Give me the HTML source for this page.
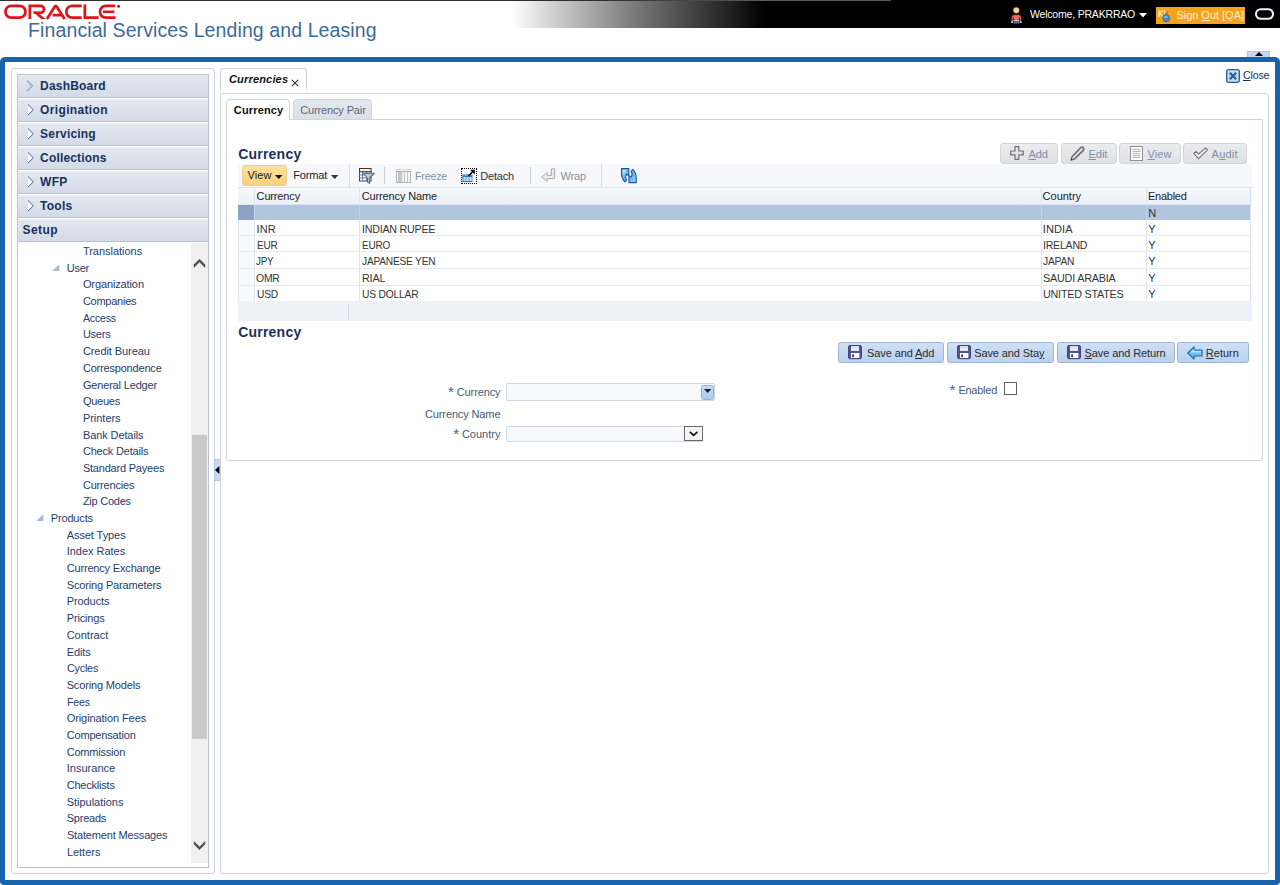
<!DOCTYPE html><html><head><meta charset="utf-8"><title>Currencies</title><style>
html,body{margin:0;padding:0}
body{width:1280px;height:885px;position:relative;overflow:hidden;background:#fff;font-family:"Liberation Sans", sans-serif;font-size:11px}
.t{position:absolute;white-space:pre;line-height:normal}
u{text-decoration:underline;text-underline-offset:1px}


.ah{position:absolute;left:18px;width:190px;height:23px;background:linear-gradient(#e3e8f0,#d4dbe7);border-top:1px solid #eaeef5;border-bottom:1px solid #b9c2cf;box-sizing:border-box}
.row{position:absolute;left:238px;width:1013px;border-bottom:1px solid #e4e8ee;box-sizing:border-box;background:#fff}
.cd{position:absolute;width:1px;background:#dfe4ea}
.gb{position:absolute;box-sizing:border-box;border:1px solid #d2d4d8;border-radius:3px;background:linear-gradient(#ececee,#e0e1e4)}
.bb{position:absolute;box-sizing:border-box;border:1px solid #9cb3d2;border-radius:2.5px;background:linear-gradient(#cfe0f4,#b9d1ee)}
svg{position:absolute;overflow:visible}

</style></head><body>
<div style="position:absolute;left:512px;top:0px;width:768px;height:28px;background:linear-gradient(to right,#fff 0px,#c8c8c8 48px,#747474 128px,#000 253px);border-bottom-left-radius:8px 3px"></div>
<div style="position:absolute;left:0px;top:0px;width:891px;height:1px;background:linear-gradient(to right,#2e2e2e 0px,#2e2e2e 600px,#5a5a5a 760px)"></div>
<svg style="left:0;top:0.2px" width="125" height="24" viewBox="0 0 125 24" fill="none" stroke="#e11219" stroke-width="2.7" stroke-linejoin="miter">
<rect x="5.45" y="5.85" width="20" height="11.8" rx="5.9" ry="5.9"/>
<path d="M29.85 19 V5.85 H40.6 A3.45 3.45 0 0 1 40.6 12.75 H33.6"/><path d="M32.6 11.4 H36.6 L45.4 19 H41.2Z" fill="#e11219" stroke="none"/>
<path d="M46.9 19 L55.2 6 H56.3 L64.6 19 M52.6 15.2 H61.5" stroke-linejoin="round"/>
<path d="M81.7 5.85 H72.2 A5.9 5.9 0 0 0 72.2 17.65 H81.7"/>
<path d="M84.85 4.5 V17.65 H98.5"/>
<path d="M115 5.85 H105.9 A5.9 5.9 0 0 0 105.9 17.65 H115.5 M103 11.75 H114.3"/>
<circle cx="118.6" cy="6.3" r="1.0" stroke-width="1.1" fill="#e11219"/>
</svg>
<span class="t" style="left:28.10px;top:19.00px;font-size:19.5px;color:#3c6a9c;letter-spacing:0.102px;">Financial Services Lending and Leasing</span>
<svg style="left:1010px;top:6px" width="14" height="19" viewBox="0 0 14 19">
<circle cx="6.3" cy="4.2" r="3.5" fill="#6a2a06"/><circle cx="6.3" cy="4.2" r="2.8" fill="#e9d6a4"/>
<path d="M1.6 14.6 V11.4 Q1.8 8.8 4.4 8.8 H8.4 Q11 8.8 11.2 11.4 V14.6 H9.6 V11.6 H9.2 V14.3 H3.6 V11.6 H3.2 V14.6Z" fill="#f0686e" stroke="#5a1c08" stroke-width="0.6"/>
<rect x="3.6" y="14.2" width="5.6" height="0.9" fill="#e8e4dc"/>
<rect x="3.8" y="15" width="5.2" height="2.6" fill="#3b6bb2"/>
<rect x="1.2" y="14.8" width="2" height="2.2" fill="#cfc09a"/><rect x="9.6" y="14.8" width="2" height="2.2" fill="#cfc09a"/>
</svg>
<span class="t" style="left:1029.90px;top:8.00px;font-size:11px;color:#fff;letter-spacing:-0.220px;transform:scaleX(0.9575);transform-origin:0 0;">Welcome, PRAKRRAO</span>
<svg style="left:1139px;top:13px" width="8" height="5"><path d="M0 0H8L4 4.5Z" fill="#fff"/></svg>
<div style="position:absolute;left:1156px;top:7px;width:89px;height:17px;background:#f5a31c"></div>
<svg style="left:1157px;top:8px" width="16" height="15" viewBox="0 0 16 15">
<path d="M2 2.4 V9 M2.4 5.8 L5.8 2.2 M3 5.6 L6.4 8.6" stroke="#fae3b0" stroke-width="1.5" fill="none"/>
<path d="M7.6 2 V8.6" stroke="#f3d9a0" stroke-width="1.3"/>
<path d="M6.2 7.4 Q9 5.4 11.6 7.6 Q13.6 10.6 11.8 13 Q9 14.8 6.6 13 Q5.2 10.4 6.2 7.4Z" fill="#4a8ad2" stroke="#2c5a94" stroke-width="0.7"/>
<path d="M7 9.4 Q9 8.2 10.6 9.2" stroke="#bcd8f4" stroke-width="0.9" fill="none"/>
<circle cx="10.4" cy="4.2" r="0.9" fill="#e85a6a"/><path d="M8.6 6.2 L10.6 5" stroke="#6a3a10" stroke-width="0.8"/>
</svg>
<span class="t" style="left:1176.40px;top:9.00px;font-size:11px;color:#fdeecb;letter-spacing:-0.022px;">Sign <u>O</u>ut [QA]</span>
<svg style="left:1255px;top:8px" width="19" height="12"><rect x="1" y="1.2" width="17" height="9.6" rx="4.8" fill="none" stroke="#c4d8f6" stroke-width="2.1"/><rect x="1" y="1.2" width="17" height="9.6" rx="4.8" fill="none" stroke="#fff" stroke-width="1.1"/></svg>
<div style="position:absolute;left:1247px;top:51px;width:23px;height:7px;background:#c4d8ef;border:1px solid #b0c8e6;border-bottom:0;box-sizing:border-box"></div>
<svg style="left:1254.5px;top:52px" width="8" height="4"><path d="M0 4L4 0L8 4Z" fill="#000"/></svg>
<div style="position:absolute;left:0px;top:57px;width:1280px;height:828px;box-sizing:border-box;border:5px solid #1664ae;border-radius:5px 5px 4px 4px;background:#fff"></div>
<div style="position:absolute;left:11px;top:68px;width:204px;height:806px;box-sizing:border-box;border:1px solid #cdd2d9;border-radius:3px"></div>
<div style="position:absolute;left:17px;top:74px;width:192px;height:794px;box-sizing:border-box;border:1px solid #b9c3d1"></div>
<div class="ah" style="top:75px"></div>
<svg style="left:26px;top:80px" width="8" height="12"><path d="M1 0.6 L6.4 5.8 L1 11" fill="none" stroke="#9cb2cd" stroke-width="1.7"/></svg>
<span class="t" style="left:40.10px;top:79.00px;font-size:12px;color:#18325c;font-weight:700;letter-spacing:0.198px;">DashBoard</span>
<div class="ah" style="top:99px"></div>
<svg style="left:26.8px;top:104px" width="8" height="12"><path d="M1 0.6 L6.4 5.8 L1 11" fill="rgba(255,255,255,.75)" stroke="#4b6084" stroke-width="1.0"/></svg>
<span class="t" style="left:40.10px;top:103.00px;font-size:12px;color:#18325c;font-weight:700;letter-spacing:0.345px;">Origination</span>
<div class="ah" style="top:123px"></div>
<svg style="left:26.8px;top:128px" width="8" height="12"><path d="M1 0.6 L6.4 5.8 L1 11" fill="rgba(255,255,255,.75)" stroke="#4b6084" stroke-width="1.0"/></svg>
<span class="t" style="left:40.10px;top:127.00px;font-size:12px;color:#18325c;font-weight:700;letter-spacing:0.197px;">Servicing</span>
<div class="ah" style="top:147px"></div>
<svg style="left:26.8px;top:152px" width="8" height="12"><path d="M1 0.6 L6.4 5.8 L1 11" fill="rgba(255,255,255,.75)" stroke="#4b6084" stroke-width="1.0"/></svg>
<span class="t" style="left:40.10px;top:151.00px;font-size:12px;color:#18325c;font-weight:700;letter-spacing:0.169px;">Collections</span>
<div class="ah" style="top:171px"></div>
<svg style="left:26.8px;top:176px" width="8" height="12"><path d="M1 0.6 L6.4 5.8 L1 11" fill="rgba(255,255,255,.75)" stroke="#4b6084" stroke-width="1.0"/></svg>
<span class="t" style="left:40.10px;top:175.00px;font-size:12px;color:#18325c;font-weight:700;letter-spacing:0.209px;">WFP</span>
<div class="ah" style="top:195px"></div>
<svg style="left:26.8px;top:200px" width="8" height="12"><path d="M1 0.6 L6.4 5.8 L1 11" fill="rgba(255,255,255,.75)" stroke="#4b6084" stroke-width="1.0"/></svg>
<span class="t" style="left:40.10px;top:199.00px;font-size:12px;color:#18325c;font-weight:700;letter-spacing:0.238px;">Tools</span>
<div class="ah" style="top:219px"></div>
<span class="t" style="left:22.60px;top:223.00px;font-size:12px;color:#18325c;font-weight:700;letter-spacing:0.411px;">Setup</span>
<div style="position:absolute;left:191px;top:243px;width:17px;height:620px;background:#f0f0f0"></div>
<div style="position:absolute;left:192px;top:435px;width:15px;height:304px;background:#c9c9c9"></div>
<svg style="left:0;top:0" width="1280" height="885"><path d="M193.8 264.6 L199.5 258.9 L205.2 264.6 V267.9 L199.5 262.3 L193.8 267.9Z" fill="#4f4f4f"/><path d="M193.8 844.3 L199.5 850 L205.2 844.3 V841 L199.5 846.7 L193.8 841Z" fill="#4f4f4f"/></svg>
<span class="t" style="left:82.90px;top:245.00px;font-size:11px;color:#1f3d6b;letter-spacing:-0.018px;">Translations</span>
<span class="t" style="left:66.70px;top:262.00px;font-size:11px;color:#1f3d6b;letter-spacing:-0.234px;">User</span>
<svg style="left:51.7px;top:264px" width="8" height="8"><path d="M7.3 0.3 V7 H0.3Z" fill="#a9b9d1"/></svg>
<span class="t" style="left:82.90px;top:278.00px;font-size:11px;color:#1f3d6b;letter-spacing:-0.115px;">Organization</span>
<span class="t" style="left:82.90px;top:295.00px;font-size:11px;color:#1f3d6b;letter-spacing:-0.249px;">Companies</span>
<span class="t" style="left:82.90px;top:312.00px;font-size:11px;color:#1f3d6b;letter-spacing:-0.220px;transform:scaleX(0.9605);transform-origin:0 0;">Access</span>
<span class="t" style="left:82.90px;top:328.00px;font-size:11px;color:#1f3d6b;letter-spacing:-0.247px;">Users</span>
<span class="t" style="left:82.90px;top:345.00px;font-size:11px;color:#1f3d6b;letter-spacing:-0.075px;">Credit Bureau</span>
<span class="t" style="left:82.90px;top:362.00px;font-size:11px;color:#1f3d6b;letter-spacing:-0.189px;">Correspondence</span>
<span class="t" style="left:82.90px;top:379.00px;font-size:11px;color:#1f3d6b;letter-spacing:-0.168px;">General Ledger</span>
<span class="t" style="left:82.90px;top:395.00px;font-size:11px;color:#1f3d6b;letter-spacing:-0.239px;">Queues</span>
<span class="t" style="left:82.90px;top:412.00px;font-size:11px;color:#1f3d6b;letter-spacing:-0.026px;">Printers</span>
<span class="t" style="left:82.90px;top:429.00px;font-size:11px;color:#1f3d6b;letter-spacing:-0.097px;">Bank Details</span>
<span class="t" style="left:82.90px;top:445.00px;font-size:11px;color:#1f3d6b;letter-spacing:-0.181px;">Check Details</span>
<span class="t" style="left:82.90px;top:462.00px;font-size:11px;color:#1f3d6b;letter-spacing:-0.206px;">Standard Payees</span>
<span class="t" style="left:82.90px;top:479.00px;font-size:11px;color:#1f3d6b;letter-spacing:-0.169px;">Currencies</span>
<span class="t" style="left:82.90px;top:495.00px;font-size:11px;color:#1f3d6b;letter-spacing:-0.249px;">Zip Codes</span>
<span class="t" style="left:50.70px;top:512.00px;font-size:11px;color:#1f3d6b;letter-spacing:-0.140px;">Products</span>
<svg style="left:35.7px;top:514px" width="8" height="8"><path d="M7.3 0.3 V7 H0.3Z" fill="#a9b9d1"/></svg>
<span class="t" style="left:66.70px;top:529.00px;font-size:11px;color:#1f3d6b;letter-spacing:-0.074px;">Asset Types</span>
<span class="t" style="left:66.70px;top:545.00px;font-size:11px;color:#1f3d6b;letter-spacing:-0.018px;">Index Rates</span>
<span class="t" style="left:66.70px;top:562.00px;font-size:11px;color:#1f3d6b;letter-spacing:-0.171px;">Currency Exchange</span>
<span class="t" style="left:66.70px;top:579.00px;font-size:11px;color:#1f3d6b;letter-spacing:-0.145px;">Scoring Parameters</span>
<span class="t" style="left:66.70px;top:595.00px;font-size:11px;color:#1f3d6b;letter-spacing:-0.078px;">Products</span>
<span class="t" style="left:66.70px;top:612.00px;font-size:11px;color:#1f3d6b;letter-spacing:-0.141px;">Pricings</span>
<span class="t" style="left:66.70px;top:629.00px;font-size:11px;color:#1f3d6b;letter-spacing:-0.010px;">Contract</span>
<span class="t" style="left:66.70px;top:646.00px;font-size:11px;color:#1f3d6b;letter-spacing:-0.074px;">Edits</span>
<span class="t" style="left:66.70px;top:662.00px;font-size:11px;color:#1f3d6b;letter-spacing:-0.220px;transform:scaleX(0.9812);transform-origin:0 0;">Cycles</span>
<span class="t" style="left:66.70px;top:679.00px;font-size:11px;color:#1f3d6b;letter-spacing:-0.152px;">Scoring Models</span>
<span class="t" style="left:66.70px;top:696.00px;font-size:11px;color:#1f3d6b;letter-spacing:-0.220px;transform:scaleX(0.9666);transform-origin:0 0;">Fees</span>
<span class="t" style="left:66.70px;top:712.00px;font-size:11px;color:#1f3d6b;letter-spacing:-0.082px;">Origination Fees</span>
<span class="t" style="left:66.70px;top:729.00px;font-size:11px;color:#1f3d6b;letter-spacing:-0.170px;">Compensation</span>
<span class="t" style="left:66.70px;top:746.00px;font-size:11px;color:#1f3d6b;letter-spacing:-0.202px;">Commission</span>
<span class="t" style="left:66.70px;top:762.00px;font-size:11px;color:#1f3d6b;letter-spacing:0.021px;">Insurance</span>
<span class="t" style="left:66.70px;top:779.00px;font-size:11px;color:#1f3d6b;letter-spacing:-0.212px;">Checklists</span>
<span class="t" style="left:66.70px;top:796.00px;font-size:11px;color:#1f3d6b;letter-spacing:-0.015px;">Stipulations</span>
<span class="t" style="left:66.70px;top:812.00px;font-size:11px;color:#1f3d6b;letter-spacing:-0.226px;">Spreads</span>
<span class="t" style="left:66.90px;top:829.00px;font-size:11px;color:#1f3d6b;letter-spacing:-0.158px;">Statement Messages</span>
<span class="t" style="left:66.90px;top:846.00px;font-size:11px;color:#1f3d6b;letter-spacing:-0.020px;">Letters</span>
<div style="position:absolute;left:214px;top:459px;width:7px;height:22px;background:#c6daf2;border:1px solid #b3cbe8;box-sizing:border-box"></div>
<svg style="left:214.8px;top:465.5px" width="5" height="9"><path d="M4.4 0 V8 L0 4Z" fill="#000"/></svg>
<div style="position:absolute;left:220px;top:68px;width:87px;height:20px;box-sizing:border-box;border:1px solid #cdd1d7;border-bottom:0;border-radius:4px 4px 0 0;background:#fff"></div>
<div style="position:absolute;left:220px;top:88px;width:1px;height:5px;background:linear-gradient(#cdd1d7,#fff)"></div>
<div style="position:absolute;left:306px;top:88px;width:1px;height:2px;background:#e6e8eb"></div>
<span class="t" style="left:229.00px;top:73.00px;font-size:11px;color:#111;font-weight:700;font-style:italic;letter-spacing:0.172px;">Currencies</span>
<svg style="left:291px;top:78.5px" width="8" height="8"><path d="M0.8 0.8 L7.2 7.2 M7.2 0.8 L0.8 7.2" stroke="#333" stroke-width="1.1"/></svg>
<div style="position:absolute;left:220px;top:93px;width:1049px;height:781px;box-sizing:border-box;border:1px solid #d0d4da;border-radius:2px 3px 3px 3px"></div>
<svg style="left:1226px;top:69px" width="14" height="14"><rect x="0.7" y="0.7" width="12.6" height="12.6" rx="1.8" fill="#bddcf6" stroke="#2a5b8f" stroke-width="1.3"/><path d="M3.8 3.8 L10.2 10.2 M10.2 3.8 L3.8 10.2" stroke="#2a6099" stroke-width="2.3"/></svg>
<span class="t" style="left:1242.90px;top:69.00px;font-size:11px;color:#18325c;letter-spacing:-0.220px;transform:scaleX(0.9726);transform-origin:0 0;"><u>C</u>lose</span>
<div style="position:absolute;left:226px;top:119px;width:1037px;height:342px;box-sizing:border-box;border:1px solid #d0d4da;border-radius:0 0 3px 3px"></div>
<div style="position:absolute;left:293px;top:99px;width:79px;height:21px;box-sizing:border-box;border:1px solid #d0d6de;border-radius:4px 4px 0 0;background:linear-gradient(#e4e9ef,#d9dfe7)"></div>
<div style="position:absolute;left:226px;top:99px;width:64px;height:21px;box-sizing:border-box;border:1px solid #d0d4da;border-bottom:0;border-radius:4px 4px 0 0;background:#fff"></div>
<span class="t" style="left:233.80px;top:104.00px;font-size:11px;color:#111;font-weight:700;letter-spacing:0.163px;">Currency</span>
<span class="t" style="left:300.20px;top:104.00px;font-size:11px;color:#5d6875;letter-spacing:-0.135px;">Currency Pair</span>
<span class="t" style="left:238.20px;top:146.00px;font-size:14px;color:#18325c;font-weight:700;letter-spacing:0.216px;">Currency</span>
<div class="gb" style="left:1000px;top:143px;width:57.5px;height:21px"></div>
<span class="t" style="left:1028.60px;top:148.00px;font-size:11px;color:#7d90ac;letter-spacing:-0.131px;"><u>A</u>dd</span>
<div class="gb" style="left:1060.5px;top:143px;width:56.0px;height:21px"></div>
<span class="t" style="left:1088.40px;top:148.00px;font-size:11px;color:#7d90ac;letter-spacing:0.008px;"><u>E</u>dit</span>
<div class="gb" style="left:1119.2px;top:143px;width:61.399999999999864px;height:21px"></div>
<span class="t" style="left:1147.60px;top:148.00px;font-size:11px;color:#7d90ac;letter-spacing:0.086px;"><u>V</u>iew</span>
<div class="gb" style="left:1183.2px;top:143px;width:63.399999999999864px;height:21px"></div>
<span class="t" style="left:1211.60px;top:148.00px;font-size:11px;color:#7d90ac;letter-spacing:0.201px;">A<u>u</u>dit</span>
<svg style="left:1010px;top:145.7px" width="14" height="14"><path d="M5 0.7 H8.8 V5 H13.3 V8.8 H8.8 V13.3 H5 V8.8 H0.7 V5 H5Z" fill="#e2e2e3" stroke="#707174" stroke-width="1.2" stroke-linejoin="round"/></svg>
<svg style="left:1070px;top:146px" width="16" height="15"><path d="M2 10.6 L11 1.2 Q12.2 0.4 13.4 1.6 Q14.6 2.8 13.8 4 L4.6 13 L0.9 14.2Z" fill="#c4c4c6" stroke="#58595c" stroke-width="1.1" stroke-linejoin="round"/><path d="M3.4 11.8 L12.4 2.6" stroke="#f0f0f0" stroke-width="0.9"/><path d="M0.9 14.2 L2.4 13.7 L1.4 12.7Z" fill="#333"/></svg>
<svg style="left:1130px;top:146px" width="13" height="15"><rect x="0.5" y="0.5" width="12" height="14" fill="#fbfbfb" stroke="#8e9094"/><path d="M2.6 3.5H10.4M2.6 5.5H10.4M2.6 7.5H10.4M2.6 9.5H10.4M2.6 11.5H10.4" stroke="#b4b6ba" stroke-width="1"/></svg>
<svg style="left:1193px;top:147px" width="16" height="13"><path d="M0.8 6.4 L2.9 4.4 L5.5 7.2 L12.5 0.8 L14.6 2.9 L5.5 11.6Z" fill="#f3f3f4" stroke="#707174" stroke-width="1.1" stroke-linejoin="round"/></svg>
<div style="position:absolute;left:238px;top:164px;width:1014px;height:23px;background:#f7f8fb"></div>
<div style="position:absolute;left:242px;top:165px;width:45px;height:21px;box-sizing:border-box;border:1px solid #efcf8c;border-radius:3px;background:linear-gradient(#fde0a0,#fbd17c)"></div>
<span class="t" style="left:247.60px;top:169.00px;font-size:11px;color:#222;letter-spacing:0.036px;">View</span>
<svg style="left:275px;top:175px" width="8" height="5"><path d="M0 0H7.4L3.7 4Z" fill="#111"/></svg>
<span class="t" style="left:293.20px;top:169.00px;font-size:11px;color:#222;letter-spacing:-0.124px;">Format</span>
<svg style="left:330.5px;top:175px" width="8" height="5"><path d="M0 0H7.4L3.7 4Z" fill="#333"/></svg>
<div style="position:absolute;left:349px;top:164px;width:1px;height:23px;background:#d9dee6"></div>
<div style="position:absolute;left:601px;top:164px;width:1px;height:23px;background:#d9dee6"></div>
<div style="position:absolute;left:384px;top:167px;width:1px;height:17px;background:#c9d0db"></div>
<div style="position:absolute;left:530px;top:167px;width:1px;height:17px;background:#c9d0db"></div>
<svg style="left:359px;top:168px" width="17" height="17" viewBox="0 0 17 17">
<rect x="0.5" y="3.6" width="11.6" height="9.4" fill="#fff" stroke="#3b4a78" stroke-width="1"/>
<rect x="3.8" y="4.2" width="8" height="1.5" fill="#bfe8f5"/>
<path d="M0.5 6.9H12M0.5 9.9H12M3.6 3.8V13M7.6 3.8V13" stroke="#6175ad" stroke-width="1"/>
<rect x="0.5" y="0.5" width="11.6" height="3.2" fill="#fdf1cf" stroke="#3a3a3a" stroke-width="1"/>
<path d="M4.2 5.3 H15.6 L10.7 10.2 V15.5 L8.5 14.2 V10.2Z" fill="#b9c9d9" stroke="#4d6478" stroke-width="1" stroke-linejoin="round"/>
<path d="M13.4 6.4 L10.4 9.6 V14.6" stroke="#64788c" stroke-width="1" fill="none"/>
</svg>
<svg style="left:396px;top:169px" width="16" height="14" viewBox="0 0 16 14"><rect x="0.5" y="0.5" width="14" height="2" fill="#fafafa" stroke="#d6d6d6"/><rect x="0.5" y="2.5" width="14" height="11" fill="#fcfcfc" stroke="#b1b1b1"/><rect x="3" y="3" width="2.4" height="10" fill="#c9c9c9"/><path d="M2.6 3V13M5.8 3V13M8.4 3V13M11.6 3V13" stroke="#bcbcbc" stroke-width="1"/></svg>
<span class="t" style="left:415.20px;top:170.00px;font-size:11px;color:#7f93ad;letter-spacing:-0.220px;transform:scaleX(0.9748);transform-origin:0 0;">Freeze</span>
<div style="position:absolute;left:461px;top:168px;width:16px;height:16px;box-sizing:border-box;border:1px dotted #000;background:#fff"></div>
<svg style="left:461px;top:168px" width="16" height="16" viewBox="0 0 16 16"><rect x="1.4" y="6.6" width="10" height="7.4" fill="#2f70b3"/><rect x="1.4" y="6.6" width="10" height="1.6" fill="#5d9bd9"/><rect x="2.4" y="9" width="2.2" height="4" fill="#e4f1fd"/><rect x="5.4" y="9" width="2.2" height="4" fill="#e4f1fd"/><rect x="8.4" y="9" width="2.2" height="4" fill="#e4f1fd"/><path d="M2.4 11H10.6" stroke="#8db9e6" stroke-width="0.8"/><path d="M7.4 8 L12.4 3" stroke="#000" stroke-width="1.5"/><path d="M9 1.8 H13.8 V6.6Z" fill="#000"/></svg>
<span class="t" style="left:480.20px;top:170.00px;font-size:11px;color:#333;letter-spacing:-0.177px;">Detach</span>
<svg style="left:541px;top:168px" width="15" height="15" viewBox="0 0 15 15"><path d="M10.4 0.8 H13.6 V10.6 H6.2 V13.4 L0.8 9 L6.2 4.6 V7.4 H10.4Z" fill="#ededee" stroke="#a9abaf" stroke-width="1"/></svg>
<span class="t" style="left:560.40px;top:170.00px;font-size:11px;color:#8d8f93;letter-spacing:-0.098px;">Wrap</span>
<svg style="left:621px;top:168px" width="16" height="16" viewBox="0 0 16 16">
<defs><linearGradient id="rg" x1="0" y1="0" x2="1" y2="1"><stop offset="0" stop-color="#9fd4fb"/><stop offset="1" stop-color="#3f9cec"/></linearGradient></defs>
<g fill="url(#rg)" stroke="#15569f" stroke-width="1.1" stroke-linejoin="round">
<path id="ra" d="M0.5 0.6 H7.8 V7.4 L5.7 6.3 Q3.5 8.8 5.6 11.7 L4 13.9 Q0.5 11 0.5 4.8Z"/>
<use href="#ra" transform="rotate(180 7.85 7.6)"/>
</g>
<path d="M1.8 2 L5.4 2 L2.4 6.4Z" fill="#d4ecfd" opacity=".7"/>
</svg>
<div style="position:absolute;left:238px;top:187px;width:1014px;height:18px;background:linear-gradient(#f5f8fc,#ecf1f8);border-top:1px solid #dfe4ec;border-bottom:1px solid #dfe4ec;box-sizing:border-box"></div>
<span class="t" style="left:256.60px;top:190.00px;font-size:11px;color:#222;letter-spacing:-0.153px;">Currency</span>
<span class="t" style="left:361.70px;top:190.00px;font-size:11px;color:#222;letter-spacing:-0.133px;">Currency Name</span>
<span class="t" style="left:1042.60px;top:190.00px;font-size:11px;color:#222;letter-spacing:-0.004px;">Country</span>
<span class="t" style="left:1148.00px;top:190.00px;font-size:11px;color:#222;letter-spacing:-0.254px;">Enabled</span>
<div style="position:absolute;left:238px;top:205px;width:1013px;height:15px;background:#b1c5df"></div>
<div style="position:absolute;left:238px;top:205px;width:16px;height:15px;background:#8da2c4"></div>
<div style="position:absolute;left:238px;top:220px;width:1013px;height:81px;background:#fff"></div>
<div style="position:absolute;left:238px;top:220px;width:16px;height:81px;background:#f7f9fc"></div>
<div style="position:absolute;left:238px;top:235px;width:1013px;height:1px;background:#e6eaf0"></div>
<div style="position:absolute;left:238px;top:251px;width:1013px;height:1px;background:#e6eaf0"></div>
<div style="position:absolute;left:238px;top:268px;width:1013px;height:1px;background:#e6eaf0"></div>
<div style="position:absolute;left:238px;top:285px;width:1013px;height:1px;background:#e6eaf0"></div>
<div style="position:absolute;left:238px;top:220px;width:1px;height:81px;background:#e3e7ee"></div>
<div style="position:absolute;left:1250px;top:187px;width:1px;height:114px;background:#dde3ec"></div>
<div style="position:absolute;left:254px;top:187px;width:1px;height:114px;background:#dfe5ee"></div>
<div style="position:absolute;left:359px;top:187px;width:1px;height:114px;background:#dfe5ee"></div>
<div style="position:absolute;left:1041px;top:187px;width:1px;height:114px;background:#dfe5ee"></div>
<div style="position:absolute;left:1146px;top:187px;width:1px;height:114px;background:#dfe5ee"></div>
<div style="position:absolute;left:254px;top:205px;width:1px;height:15px;background:#c4d3e8"></div>
<div style="position:absolute;left:359px;top:205px;width:1px;height:15px;background:#c4d3e8"></div>
<div style="position:absolute;left:1041px;top:205px;width:1px;height:15px;background:#c4d3e8"></div>
<div style="position:absolute;left:1146px;top:205px;width:1px;height:15px;background:#c4d3e8"></div>
<span class="t" style="left:1148.20px;top:207.00px;font-size:11px;color:#333;">N</span>
<span class="t" style="left:256.60px;top:223.00px;font-size:11px;color:#333;letter-spacing:0.049px;">INR</span>
<span class="t" style="left:361.90px;top:223.00px;font-size:11px;color:#333;letter-spacing:-0.220px;transform:scaleX(0.9681);transform-origin:0 0;">INDIAN RUPEE</span>
<span class="t" style="left:1042.70px;top:223.00px;font-size:11px;color:#333;letter-spacing:0.151px;">INDIA</span>
<span class="t" style="left:1148.20px;top:223.00px;font-size:11px;color:#333;">Y</span>
<span class="t" style="left:256.70px;top:239.00px;font-size:11px;color:#333;letter-spacing:-0.220px;transform:scaleX(0.9125);transform-origin:0 0;">EUR</span>
<span class="t" style="left:361.90px;top:239.00px;font-size:11px;color:#333;letter-spacing:-0.220px;transform:scaleX(0.9061);transform-origin:0 0;">EURO</span>
<span class="t" style="left:1042.70px;top:239.00px;font-size:11px;color:#333;letter-spacing:-0.220px;transform:scaleX(0.9578);transform-origin:0 0;">IRELAND</span>
<span class="t" style="left:1148.20px;top:239.00px;font-size:11px;color:#333;">Y</span>
<span class="t" style="left:256.40px;top:255.00px;font-size:11px;color:#333;letter-spacing:-0.220px;transform:scaleX(0.8911);transform-origin:0 0;">JPY</span>
<span class="t" style="left:361.70px;top:255.00px;font-size:11px;color:#333;letter-spacing:-0.220px;transform:scaleX(0.9234);transform-origin:0 0;">JAPANESE YEN</span>
<span class="t" style="left:1042.70px;top:255.00px;font-size:11px;color:#333;letter-spacing:-0.220px;transform:scaleX(0.9302);transform-origin:0 0;">JAPAN</span>
<span class="t" style="left:1148.20px;top:255.00px;font-size:11px;color:#333;">Y</span>
<span class="t" style="left:256.40px;top:272.00px;font-size:11px;color:#333;letter-spacing:-0.220px;transform:scaleX(0.9475);transform-origin:0 0;">OMR</span>
<span class="t" style="left:361.90px;top:272.00px;font-size:11px;color:#333;letter-spacing:-0.220px;transform:scaleX(0.9835);transform-origin:0 0;">RIAL</span>
<span class="t" style="left:1042.70px;top:272.00px;font-size:11px;color:#333;letter-spacing:-0.220px;transform:scaleX(0.9826);transform-origin:0 0;">SAUDI ARABIA</span>
<span class="t" style="left:1148.20px;top:272.00px;font-size:11px;color:#333;">Y</span>
<span class="t" style="left:256.70px;top:288.00px;font-size:11px;color:#333;letter-spacing:-0.220px;transform:scaleX(0.9303);transform-origin:0 0;">USD</span>
<span class="t" style="left:361.90px;top:288.00px;font-size:11px;color:#333;letter-spacing:-0.220px;transform:scaleX(0.9357);transform-origin:0 0;">US DOLLAR</span>
<span class="t" style="left:1042.70px;top:288.00px;font-size:11px;color:#333;letter-spacing:-0.220px;transform:scaleX(0.9782);transform-origin:0 0;">UNITED STATES</span>
<span class="t" style="left:1148.20px;top:288.00px;font-size:11px;color:#333;">Y</span>
<div style="position:absolute;left:238px;top:301px;width:1014px;height:20px;background:#eef2f8"></div>
<div style="position:absolute;left:348px;top:304px;width:1px;height:16px;background:#d5dbe4"></div>
<span class="t" style="left:238.20px;top:324.00px;font-size:14px;color:#18325c;font-weight:700;letter-spacing:0.216px;">Currency</span>
<div class="bb" style="left:838px;top:342px;width:105.5px;height:21px"></div>
<span class="t" style="left:867.00px;top:347.00px;font-size:11px;color:#2b2b2b;letter-spacing:-0.094px;">Save and <u>A</u>dd</span>
<svg style="left:848.3px;top:345px" width="14" height="14" viewBox="0 0 14 14"><rect x="0.5" y="0.5" width="13" height="13.2" rx="1.4" fill="#50558f" stroke="#41457c" stroke-width="1"/><rect x="3" y="1" width="8" height="5" fill="#dcdcf0"/><rect x="3" y="3.6" width="8" height="1.2" fill="#f6f6fc"/><rect x="3" y="8" width="8.4" height="5" fill="#fff"/><rect x="4.2" y="9.4" width="1.8" height="2.8" fill="#2f3364"/></svg>
<div class="bb" style="left:946.5px;top:342px;width:107.0px;height:21px"></div>
<span class="t" style="left:974.20px;top:347.00px;font-size:11px;color:#2b2b2b;letter-spacing:-0.105px;">Save and Sta<u>y</u></span>
<svg style="left:956.8px;top:345px" width="14" height="14" viewBox="0 0 14 14"><rect x="0.5" y="0.5" width="13" height="13.2" rx="1.4" fill="#50558f" stroke="#41457c" stroke-width="1"/><rect x="3" y="1" width="8" height="5" fill="#dcdcf0"/><rect x="3" y="3.6" width="8" height="1.2" fill="#f6f6fc"/><rect x="3" y="8" width="8.4" height="5" fill="#fff"/><rect x="4.2" y="9.4" width="1.8" height="2.8" fill="#2f3364"/></svg>
<div class="bb" style="left:1056.5px;top:342px;width:118.0px;height:21px"></div>
<span class="t" style="left:1084.60px;top:347.00px;font-size:11px;color:#2b2b2b;letter-spacing:-0.104px;"><u>S</u>ave and Return</span>
<svg style="left:1066.8px;top:345px" width="14" height="14" viewBox="0 0 14 14"><rect x="0.5" y="0.5" width="13" height="13.2" rx="1.4" fill="#50558f" stroke="#41457c" stroke-width="1"/><rect x="3" y="1" width="8" height="5" fill="#dcdcf0"/><rect x="3" y="3.6" width="8" height="1.2" fill="#f6f6fc"/><rect x="3" y="8" width="8.4" height="5" fill="#fff"/><rect x="4.2" y="9.4" width="1.8" height="2.8" fill="#2f3364"/></svg>
<div class="bb" style="left:1177px;top:342px;width:72px;height:21px"></div>
<span class="t" style="left:1205.80px;top:347.00px;font-size:11px;color:#2b2b2b;letter-spacing:0.011px;"><u>R</u>eturn</span>
<svg style="left:1187px;top:345.5px" width="16" height="14" viewBox="0 0 16 14"><path d="M7 0.8 V4 H15 V10 H7 V13.2 L0.8 7Z" fill="#6fc0f2" stroke="#1f6db8" stroke-width="1.2" stroke-linejoin="round"/><path d="M7 2.6 V5 H14 V6.6 H3.4Z" fill="#c5e8fb" opacity=".8"/></svg>
<span class="t" style="left:448.10px;top:383.00px;font-size:15px;color:#33669f;">*</span>
<span class="t" style="left:456.80px;top:386.00px;font-size:11px;color:#4a5a72;letter-spacing:-0.128px;">Currency</span>
<div style="position:absolute;left:506px;top:383px;width:209px;height:18px;box-sizing:border-box;border:1px solid #d3d9e2;border-radius:2px;background:#f7f9fc"></div>
<div style="position:absolute;left:701px;top:385px;width:13px;height:15px;box-sizing:border-box;border:1px solid #8fb2de;border-radius:2.5px;background:linear-gradient(#c4dcf6,#a9cbf0)"></div>
<svg style="left:704px;top:389.3px" width="8" height="5"><path d="M0 0H7.4L3.7 4Z" fill="#222"/></svg>
<span class="t" style="left:425.00px;top:408.00px;font-size:11px;color:#4a5a72;letter-spacing:-0.125px;">Currency Name</span>
<span class="t" style="left:453.20px;top:425.00px;font-size:15px;color:#33669f;">*</span>
<span class="t" style="left:461.90px;top:428.00px;font-size:11px;color:#4a5a72;letter-spacing:-0.004px;">Country</span>
<div style="position:absolute;left:506px;top:425.5px;width:197px;height:16px;box-sizing:border-box;border:1px solid #d3d9e2;border-radius:2px;background:#f7f9fc"></div>
<div style="position:absolute;left:684px;top:426px;width:19px;height:15px;box-sizing:border-box;border:1px solid #6a6a6a;background:#f4f4f4"></div>
<svg style="left:688.5px;top:431px" width="10" height="6"><path d="M0.8 0.8 L4.6 4.4 L8.4 0.8" fill="none" stroke="#111" stroke-width="1.6"/></svg>
<span class="t" style="left:949.60px;top:381.00px;font-size:15px;color:#33669f;">*</span>
<span class="t" style="left:958.40px;top:384.00px;font-size:11px;color:#4a5a72;letter-spacing:-0.239px;">Enabled</span>
<div style="position:absolute;left:1004px;top:382px;width:13px;height:13px;box-sizing:border-box;border:1px solid #606060;background:#fff"></div>
</body></html>
